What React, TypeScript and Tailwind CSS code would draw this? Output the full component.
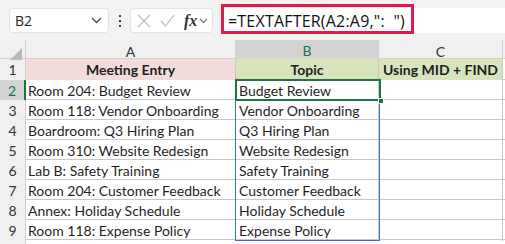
import React from "react";

const rows = [
  ["Room 204: Budget Review", "Budget Review"],
  ["Room 118: Vendor Onboarding", "Vendor Onboarding"],
  ["Boardroom: Q3 Hiring Plan", "Q3 Hiring Plan"],
  ["Room 310: Website Redesign", "Website Redesign"],
  ["Lab B: Safety Training", "Safety Training"],
  ["Room 204: Customer Feedback", "Customer Feedback"],
  ["Annex: Holiday Schedule", "Holiday Schedule"],
  ["Room 118: Expense Policy", "Expense Policy"],
];

const cols = "grid grid-cols-[26px_210px_143px_124px_1fr]";

export default function App() {
  return (
    <div className="w-[505px] h-[244px] overflow-hidden bg-white text-[#1f1f1f] font-['Lato',sans-serif]">
      {/* FORMULA BAR */}
      <div className="h-[40px] bg-[#f3f3f3] flex items-start pt-[8px] pl-[9px] gap-[8px]">
        <div className="w-[100px] h-[25px] bg-white rounded-[4px] border border-[#e3e3e3] flex items-center justify-between pl-[5px] pr-[6px] font-['Open_Sans',sans-serif] text-[14px] text-[#222]">
          <span>B2</span>
          <svg width="11" height="7" viewBox="0 0 11 7" fill="none">
            <path d="M1 1l4.5 4.5L10 1" stroke="#444" strokeWidth="1.3" />
          </svg>
        </div>
        <div className="w-[5px] h-[25px] flex flex-col items-center justify-center gap-[3px]">
          <span className="w-[2px] h-[2px] bg-[#444]" />
          <span className="w-[2px] h-[2px] bg-[#444]" />
          <span className="w-[2px] h-[2px] bg-[#444]" />
        </div>
        <div className="w-[83px] h-[25px] bg-white rounded-[4px] border border-[#e3e3e3] flex items-center pl-[6px] gap-[9px]">
          <svg width="14" height="14" viewBox="0 0 14 14" fill="none">
            <path d="M1 1l12 12M13 1L1 13" stroke="#bdbdbd" strokeWidth="1.2" />
          </svg>
          <svg width="15" height="13" viewBox="0 0 15 13" fill="none">
            <path d="M1 7l4.5 5L14 1" stroke="#bdbdbd" strokeWidth="1.2" />
          </svg>
          <div className="flex items-center gap-[2px]">
            <span className="font-['Liberation_Serif',serif] italic text-[16px] leading-none text-[#333] font-bold">
              fx
            </span>
            <svg width="9" height="6" viewBox="0 0 9 6" fill="none">
              <path d="M1 1l3.5 3.5L8 1" stroke="#777" strokeWidth="1.1" />
            </svg>
          </div>
        </div>
        <div className="flex-1 h-[25px] bg-white relative">
          <div className="absolute left-0 top-[-4px] w-[193px] h-[30px] border-[3px] border-[#e5194c]" />
          <div className="pl-[7px] h-full flex items-center font-['Open_Sans',sans-serif] text-[16px] text-[#111] tracking-[0.2px]">
            =TEXTAFTER(A2:A9,":&nbsp;&nbsp;")
          </div>
        </div>
      </div>

      {/* GRID */}
      <div className="relative text-[14px]">
        {/* column headers */}
        <div className={`${cols} h-[19px] bg-[#f0f0f0] text-[#333] text-[14px] border-b border-[#d0d0d0]`}>
          <div className="relative border-r border-[#d0d0d0]">
            <div className="absolute right-[3px] bottom-[3px] w-0 h-0 border-l-[12px] border-l-transparent border-b-[12px] border-b-[#b8b8b8]" />
          </div>
          <div className="flex items-center justify-center border-r border-[#d0d0d0]">A</div>
          <div className="flex items-center justify-center border-r border-[#d0d0d0] bg-[#d3d3d3] text-[#217346] border-b-2 border-b-[#217346]">
            B
          </div>
          <div className="flex items-center justify-center border-r border-[#d0d0d0]">C</div>
          <div />
        </div>

        {/* row 1 */}
        <div className={`${cols} h-[21px] border-b border-[#c8c8c8]`}>
          <div className="bg-[#f0f0f0] border-r border-[#d0d0d0] flex items-center justify-center text-[#333]">1</div>
          <div className="bg-[#f2dcdb] border-r border-[#c8c8c8] flex items-center justify-center font-bold">
            Meeting Entry
          </div>
          <div className="bg-[#d8e4bc] border-r border-[#c8c8c8] flex items-center justify-center font-bold">
            Topic
          </div>
          <div className="bg-[#d8e4bc] border-r border-[#c8c8c8] flex items-center justify-center font-bold">
            Using MID + FIND
          </div>
          <div />
        </div>

        {rows.map(([entry, topic], i) => (
          <div key={i} className={`${cols} h-[20px] border-b border-[#c8c8c8]`}>
            <div
              className={
                i === 0
                  ? "bg-[#d3d3d3] border-r-2 border-[#217346] flex items-center justify-center text-[#217346]"
                  : "bg-[#f0f0f0] border-r border-[#d0d0d0] flex items-center justify-center text-[#333]"
              }
            >
              {i + 2}
            </div>
            <div className="border-r border-[#c8c8c8] flex items-center pl-[2px] whitespace-nowrap">{entry}</div>
            <div className="border-r border-[#c8c8c8] flex items-center pl-[3px] whitespace-nowrap">{topic}</div>
            <div className="border-r border-[#c8c8c8]" />
            <div />
          </div>
        ))}
        <div className={`${cols} h-[10px]`}>
          <div className="bg-[#f0f0f0] border-r border-[#d0d0d0]" />
        </div>

        {/* spill range border B2:B9 */}
        <div className="absolute left-[235px] top-[40px] w-[145px] h-[161px] border border-[#2f6fd6] pointer-events-none" />
        {/* active cell B2 */}
        <div className="absolute left-[235px] top-[39px] w-[146px] h-[22px] border-2 border-[#217346] pointer-events-none" />
        <div className="absolute left-[378px] top-[58px] w-[6px] h-[6px] bg-[#217346] border border-white pointer-events-none" />
      </div>
    </div>
  );
}
